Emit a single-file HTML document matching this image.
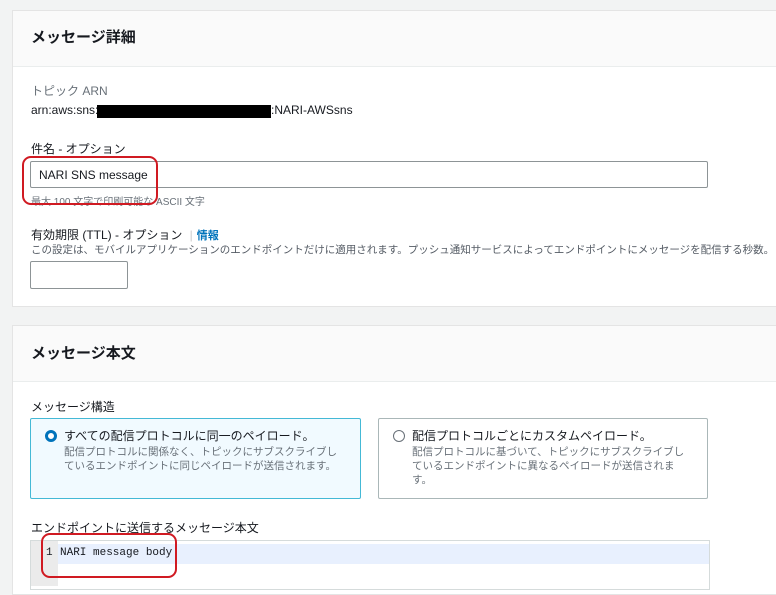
<!DOCTYPE html>
<html><head><meta charset="utf-8"><style>
*{box-sizing:border-box;margin:0;padding:0}
body{width:776px;height:582px;overflow:hidden;background:#f2f3f3;font-family:"Liberation Sans","Noto Sans CJK JP",sans-serif;color:#16191f;position:relative}
.a{position:absolute;white-space:nowrap}
.card{position:absolute;left:12px;width:780px;background:#fff;border:1px solid #e4e4e4}
.hdr{position:absolute;left:0;right:0;top:0;background:#fafafa;border-bottom:1px solid #eaeded}
.h{font-size:15px;font-weight:bold;color:#16191f}
.lbl{font-size:12px;color:#16191f}
.sm{font-size:10px;color:#687078}
.red{position:absolute;border:2.5px solid #d01a22;border-radius:9px}
</style></head><body>
<div class="card" style="top:10px;height:297px">
  <div class="hdr" style="height:56px"></div>
</div>
<div class="a h" style="left:31px;top:26px">メッセージ詳細</div>
<div class="a lbl" style="left:31px;top:82px;color:#687078">トピック ARN</div>
<div class="a lbl" style="left:31px;top:103px">arn:aws:sns:</div>
<div class="a" style="left:97px;top:105px;width:174px;height:13px;background:#000"></div>
<div class="a lbl" style="left:271px;top:103px">:NARI-AWSsns</div>
<div class="a lbl" style="left:31px;top:140px">件名 - オプション</div>
<div class="a" style="left:30px;top:161px;width:678px;height:27px;border:1px solid #8d9496;border-radius:2px;background:#fff"></div>
<div class="a lbl" style="left:39px;top:168px">NARI SNS message</div>
<div class="a sm" style="left:31px;top:193px">最大 100 文字で印刷可能な ASCII 文字</div>
<div class="a lbl" style="left:31px;top:226px">有効期限 (TTL) - オプション <span style="color:#ccc;margin:0 4px">|</span><span style="color:#0073bb;font-weight:bold;font-size:11px">情報</span></div>
<div class="a" style="left:31px;top:242px;font-size:10.5px;color:#545b64">この設定は、モバイルアプリケーションのエンドポイントだけに適用されます。プッシュ通知サービスによってエンドポイントにメッセージを配信する秒数。</div>
<div class="a" style="left:30px;top:261px;width:98px;height:28px;border:1px solid #8d9496;border-radius:2px;background:#fff"></div>
<div class="red" style="left:22px;top:156px;width:136px;height:49px"></div>

<div class="card" style="top:325px;height:270px">
  <div class="hdr" style="height:56px"></div>
</div>
<div class="a h" style="left:31px;top:342px">メッセージ本文</div>
<div class="a lbl" style="left:31px;top:398px">メッセージ構造</div>
<div class="a" style="left:30px;top:418px;width:331px;height:81px;border:1px solid #44b9d6;background:#f1faff;border-radius:2px"></div>
<div class="a" style="left:45px;top:430px;width:12px;height:12px;border-radius:50%;border:3.5px solid #0073bb;background:#fff"></div>
<div class="a" style="left:64px;top:427px;font-size:12px">すべての配信プロトコルに同一のペイロード。</div>
<div class="a" style="left:64px;top:445px;font-size:10.5px;color:#687078;line-height:14px">配信プロトコルに関係なく、トピックにサブスクライブし<br>ているエンドポイントに同じペイロードが送信されます。</div>
<div class="a" style="left:378px;top:418px;width:330px;height:81px;border:1px solid #aab7b8;background:#fff;border-radius:2px"></div>
<div class="a" style="left:393px;top:430px;width:12px;height:12px;border-radius:50%;border:1px solid #687078;background:#fff"></div>
<div class="a" style="left:412px;top:427px;font-size:12px">配信プロトコルごとにカスタムペイロード。</div>
<div class="a" style="left:412px;top:445px;font-size:10.5px;color:#687078;line-height:14px">配信プロトコルに基づいて、トピックにサブスクライブし<br>ているエンドポイントに異なるペイロードが送信されま<br>す。</div>
<div class="a lbl" style="left:31px;top:519px">エンドポイントに送信するメッセージ本文</div>
<div class="a" style="left:30px;top:540px;width:680px;height:50px;border:1px solid #d5dbdb;background:#fff"></div>
<div class="a" style="left:31px;top:541px;width:27px;height:45px;background:#ebebeb"></div>
<div class="a" style="left:58px;top:544px;width:651px;height:20px;background:#e8f0fe"></div>
<div class="a" style="left:46px;top:547px;font-family:'Liberation Mono',monospace;font-size:11px">1</div>
<div class="a" style="left:60px;top:547px;font-family:'Liberation Mono',monospace;font-size:11px">NARI message body</div>
<div class="red" style="left:41px;top:533px;width:136px;height:45px"></div>
</body></html>
